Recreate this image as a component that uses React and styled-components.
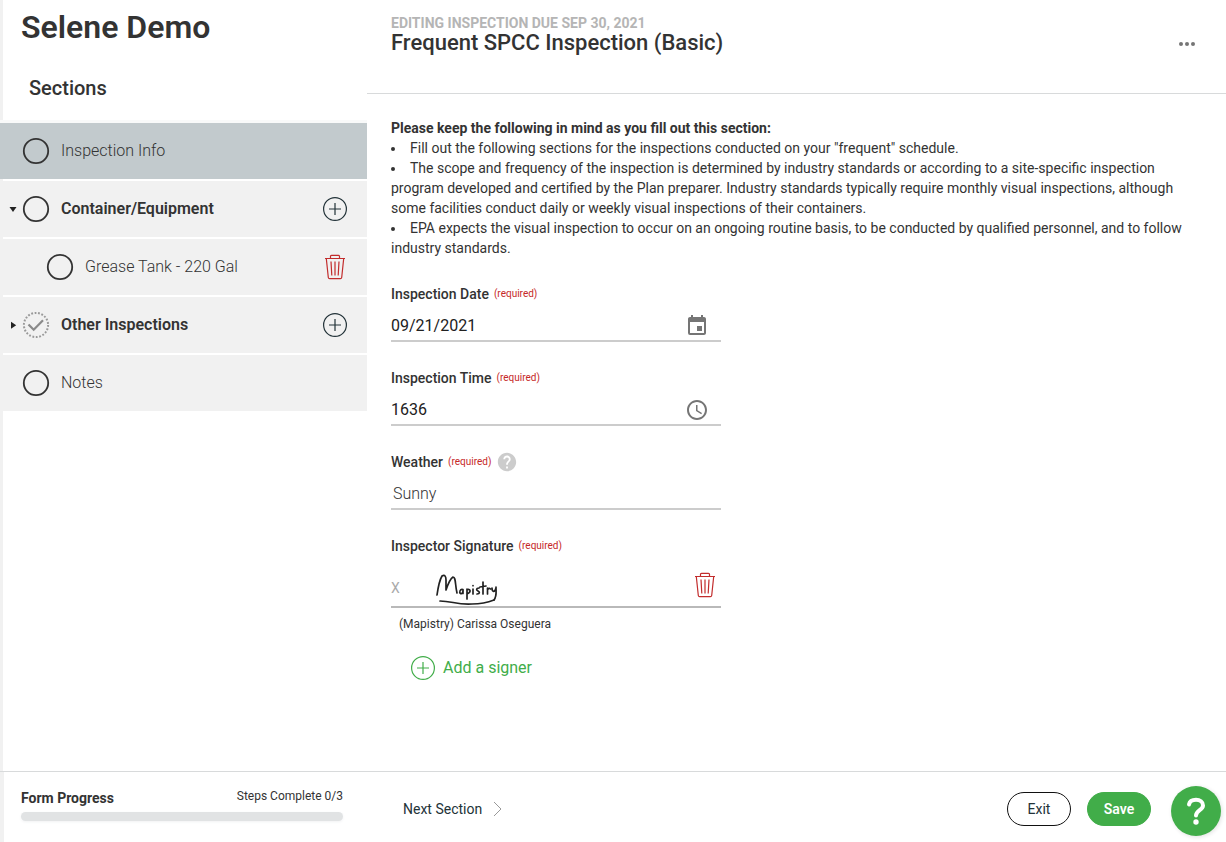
import React from "react";
import styled, { createGlobalStyle, css } from "styled-components";
import { MdEvent, MdAccessTime, MdHelp } from "react-icons/md";

const color = {
  text: "#333333",
  ink: "#223238",
  grey: "#f1f1f1",
  selected: "#c2cacd",
  line: "#d8dadb",
  field: "#cccccc",
  green: "#41ad49",
  red: "#c62828",
};

const GlobalStyle = createGlobalStyle`
  *, *::before, *::after { box-sizing: border-box; }
  body {
    margin: 0;
    background: #fff;
    color: ${color.text};
    font-family: Roboto, "Liberation Sans", sans-serif;
    font-size: 14px;
    line-height: 20px;
  }
  h1, h2, h3, p, ul { margin: 0; padding: 0; }
  ul { list-style: none; }
  button, input { font: inherit; color: inherit; }
`;

const Page = styled.div`
  display: grid;
  grid-template-columns: 367px minmax(0, 1fr);
  grid-template-rows: 1fr auto;
  min-height: 100vh;
`;

const Sidebar = styled.aside`
  background: linear-gradient(to right, ${color.grey} 3px, #fff 3px);
`;

const SiteName = styled.h1`
  padding: 7px 21px 0;
  font-size: 32px;
  line-height: 40px;
  font-weight: 600;
`;

const SectionsTitle = styled.h2`
  padding: 29px 29px 0;
  font-size: 20px;
  line-height: 24px;
  font-weight: 500;
`;

const SectionList = styled.ul`
  display: flex;
  flex-direction: column;
  gap: 2px;
  margin-top: 20px;
  border-top: 3px solid #f8f9f9;
`;

const SectionRow = styled.li`
  display: flex;
  align-items: center;
  height: 56px;
  padding: 0 20px 0 ${(p) => (p.$nested ? 32 : 8)}px;
  background: ${(p) => (p.$selected ? color.selected : color.grey)};
`;

const Toggle = styled.button`
  display: flex;
  align-items: center;
  justify-content: center;
  width: 10px;
  height: 24px;
  padding: 0;
  border: 0;
  background: none;
`;

const ToggleSpace = styled.span`
  width: 10px;
`;

const SectionLink = styled.a`
  display: flex;
  flex: 1;
  align-items: center;
  gap: 11px;
  margin-left: 4px;
  color: ${color.text};
  font-size: 16px;
  line-height: 24px;
  font-weight: ${(p) => (p.$strong ? 600 : 300)};
  text-decoration: none;
`;

const IconButton = styled.button`
  display: flex;
  align-items: center;
  justify-content: center;
  padding: 0;
  border: 0;
  background: none;
  cursor: pointer;
`;

const RowAction = styled(IconButton)`
  width: 24px;
`;

const Main = styled.main`
  min-width: 0;
`;

const Header = styled.header`
  display: flex;
  align-items: flex-start;
  justify-content: space-between;
  height: 94px;
  padding: 14px 30px 0 24px;
  border-bottom: 1px solid ${color.line};
`;

const Eyebrow = styled.p`
  color: #b5b5b5;
  font-weight: 700;
  line-height: 18px;
  text-transform: uppercase;
`;

const FormTitle = styled.h2`
  font-size: 22px;
  line-height: 22px;
  font-weight: 500;
`;

const MenuButton = styled(IconButton)`
  margin-top: 26px;
`;

const Body = styled.form`
  padding: 24px;
`;

const Guidance = styled.section`
  h3 {
    font-size: 14px;
    line-height: 20px;
    font-weight: 700;
  }
  li::before {
    content: "";
    display: inline-block;
    width: 4px;
    height: 4px;
    margin-right: 15px;
    border-radius: 50%;
    background: ${color.text};
    vertical-align: 2px;
  }
`;

const Fields = styled.div`
  display: flex;
  flex-direction: column;
  gap: 26px;
  width: 330px;
  margin-top: 26px;
`;

const LabelLine = styled.div`
  display: flex;
  align-items: center;
  gap: 5px;
  height: 20px;
  label, h3 {
    font-size: 14px;
    line-height: 20px;
    font-weight: 500;
  }
`;

const Required = styled.span`
  color: ${color.red};
  font-size: 10px;
  line-height: 20px;
`;

const InputLine = styled.div`
  display: flex;
  align-items: center;
  height: 38px;
  padding: ${(p) => (p.$inset ? "8px 12px 0 2px" : "8px 12px 0 0")};
  border-bottom: 2px solid ${color.field};
  svg { color: #757575; }
`;

const Input = styled.input`
  flex: 1;
  min-width: 0;
  padding: 0;
  border: 0;
  outline: 0;
  background: none;
  color: ${(p) => (p.$light ? color.text : "#212121")};
  font-size: 16px;
  line-height: 24px;
  font-weight: ${(p) => (p.$light ? 300 : 400)};
`;

const SignatureLine = styled.div`
  display: flex;
  align-items: center;
  height: 52px;
  padding: 8px 5px 0 0;
  border-bottom: 2px solid #b9b9b9;
`;

const SignMark = styled.span`
  width: 44px;
  padding-top: 6px;
  color: #aaaaaa;
`;

const SignatureArt = styled.span`
  display: flex;
  flex: 1;
  padding-top: 10px;
`;

const Signer = styled.p`
  padding: 6px 8px;
  font-size: 12px;
`;

const AddSigner = styled.button`
  display: flex;
  align-items: center;
  gap: 8px;
  margin: 16px 20px 0;
  padding: 0;
  border: 0;
  background: none;
  color: ${color.green};
  font-size: 16px;
  line-height: 24px;
  cursor: pointer;
`;

const Progress = styled.section`
  height: 71px;
  padding: 15px 24px 0 21px;
  border-top: 1px solid ${color.line};
  background: linear-gradient(to right, ${color.grey} 4px, #fff 4px);
`;

const ProgressText = styled.div`
  display: flex;
  justify-content: space-between;
  margin-bottom: 4px;
  h3 {
    padding-top: 1px;
    font-size: 14px;
    line-height: 20px;
    font-weight: 700;
  }
  span {
    font-size: 12px;
    line-height: 18px;
  }
`;

const Track = styled.div`
  height: 9px;
  border-radius: 5px;
  background: #e1e3e4;
  box-shadow: 0 1px 3px #f1f2f3;
`;

const Footer = styled.footer`
  display: flex;
  align-items: center;
  height: 71px;
  padding: 4px 5px 0 36px;
  border-top: 1px solid ${color.line};
`;

const NextButton = styled.button`
  display: flex;
  align-items: center;
  gap: 11px;
  margin-right: auto;
  padding: 0;
  border: 0;
  background: none;
  color: ${color.ink};
  cursor: pointer;
`;

const PillButton = styled.button`
  width: 64px;
  height: 34px;
  margin-right: 16px;
  padding: 0;
  border: 1px solid #111;
  border-radius: 17px;
  background: #fff;
  color: ${color.ink};
  cursor: pointer;
  ${(p) =>
    p.$primary &&
    css`
      border-color: ${color.green};
      background: ${color.green};
      color: #fff;
      font-weight: 600;
    `}
`;

const HelpButton = styled.button`
  display: flex;
  align-items: center;
  justify-content: center;
  width: 50px;
  height: 50px;
  margin: 4px 0 0 4px;
  padding: 0;
  border: 0;
  border-radius: 50%;
  background: ${color.green};
  box-shadow: 1px 1px 4px rgba(0, 0, 0, 0.12);
  cursor: pointer;
`;

function StatusIcon({ checked }) {
  return (
    <svg width="28" height="28" viewBox="0 0 28 28" fill="none" aria-hidden="true">
      {checked ? (
        <>
          <circle cx="14" cy="14" r="12.1" stroke="#999" strokeWidth="2" strokeDasharray="1.8 1.655" />
          <path d="M6.5 13.5l5.2 5.2L21 9.2" stroke="#8a8a8a" strokeWidth="2.2" />
        </>
      ) : (
        <circle cx="14" cy="14" r="12.2" stroke="#333" strokeWidth="1.8" />
      )}
    </svg>
  );
}

function Arrow({ open }) {
  return (
    <svg width="8" height="8" viewBox="0 0 8 8" fill="#222" aria-hidden="true">
      <path d={open ? "M.5 2h7L4 7z" : "M2 .7v7l5.2-3.5z"} />
    </svg>
  );
}

function PlusIcon({ stroke }) {
  return (
    <svg width="24" height="24" viewBox="0 0 24 24" fill="none" stroke={stroke} aria-hidden="true">
      <circle cx="12" cy="12" r="11.4" strokeWidth="1.2" />
      <path d="M12 6v12M6 12h12" strokeWidth="1.2" />
    </svg>
  );
}

function TrashIcon() {
  return (
    <svg width="22" height="26" viewBox="0 0 22 26" fill="none" stroke="#c22c2c" strokeWidth="1.2" aria-hidden="true">
      <path d="M1 4.5h20M6.5 4.5V2.3q0-1 1-1h7q1 0 1 1v2.2M2.3 4.5l2 19q.2 1.2 1.3 1.2h10.8q1.1 0 1.3-1.2l2-19" />
      <path d="M7 7.5l.8 14M11 7.5v14M15 7.5l-.8 14" />
    </svg>
  );
}

function Signature() {
  return (
    <svg width="64" height="34" viewBox="0 0 64 34" fill="none" stroke="#222" strokeWidth="1.7" strokeLinecap="round" strokeLinejoin="round" role="img" aria-label="Signature">
      <path d="M2 22C3 15 4 8 7 3c3-2 4 1 4 4v10c2-6 4-11 7-13 3 0 2 8 4 16" />
      <path d="M28 16.500c-3-1-4 3-2.500 4s3-2 2.500-4v4M32 16v10M32 17c3-2 5 2 0 4M38 16v5M38 12.500v.2M44 15c-3 0-3 2-1 3s2 3-1 3M48 9v12M45 14l6-1M52.500 15v6M52.500 17c1-2 2-2 3-1M57 15c0 5 3 4 4 0M61 14c0 6 1 9-2 13" />
      <path d="M5 28c12 0 17 4 32 3 10 0 17-2 22-4" />
    </svg>
  );
}

const SECTIONS = [
  { name: "Inspection Info", selected: true },
  { name: "Container/Equipment", group: true, open: true },
  { name: "Grease Tank - 220 Gal", nested: true },
  { name: "Other Inspections", group: true, checked: true },
  { name: "Notes" },
];

const GUIDANCE = [
  'Fill out the following sections for the inspections conducted on your "frequent" schedule.',
  "The scope and frequency of the inspection is determined by industry standards or according to a site-specific inspection program developed and certified by the Plan preparer. Industry standards typically require monthly visual inspections, although some facilities conduct daily or weekly visual inspections of their containers.",
  "EPA expects the visual inspection to occur on an ongoing routine basis, to be conducted by qualified personnel, and to follow industry standards.",
];

function Section({ name, selected, group, open, nested, checked }) {
  return (
    <SectionRow $selected={selected} $nested={nested}>
      {group ? (
        <Toggle type="button" aria-label={`Toggle ${name}`} aria-expanded={!!open}>
          <Arrow open={open} />
        </Toggle>
      ) : (
        <ToggleSpace />
      )}
      <SectionLink href="#" $strong={group} aria-current={selected ? "true" : undefined}>
        <StatusIcon checked={checked} />
        {name}
      </SectionLink>
      {group && (
        <RowAction type="button" aria-label={`Add to ${name}`}>
          <PlusIcon stroke="#223238" />
        </RowAction>
      )}
      {nested && (
        <RowAction type="button" aria-label={`Delete ${name}`}>
          <TrashIcon />
        </RowAction>
      )}
    </SectionRow>
  );
}

function Field({ id, label, value, light, help, icon }) {
  return (
    <div>
      <LabelLine>
        <label htmlFor={id}>{label}</label>
        <Required>(required)</Required>
        {help && (
          <IconButton type="button" aria-label={`About ${label}`}>
            <MdHelp size={22} color="#cccccc" />
          </IconButton>
        )}
      </LabelLine>
      <InputLine $inset={light}>
        <Input id={id} defaultValue={value} $light={light} />
        {icon}
      </InputLine>
    </div>
  );
}

export default function App() {
  return (
    <>
      <GlobalStyle />
      <Page>
        <Sidebar>
          <SiteName>Selene Demo</SiteName>
          <SectionsTitle>Sections</SectionsTitle>
          <SectionList>
            {SECTIONS.map((s) => (
              <Section key={s.name} {...s} />
            ))}
          </SectionList>
        </Sidebar>
        <Main>
          <Header>
            <div>
              <Eyebrow>Editing inspection due Sep 30, 2021</Eyebrow>
              <FormTitle>Frequent SPCC Inspection (Basic)</FormTitle>
            </div>
            <MenuButton type="button" aria-label="More options">
              <svg width="18" height="8" viewBox="0 0 18 8" fill="#757575" aria-hidden="true">
                <circle cx="3" cy="4" r="2" />
                <circle cx="9" cy="4" r="2" />
                <circle cx="15" cy="4" r="2" />
              </svg>
            </MenuButton>
          </Header>
          <Body>
            <Guidance>
              <h3>Please keep the following in mind as you fill out this section:</h3>
              <ul>
                {GUIDANCE.map((g) => (
                  <li key={g}>{g}</li>
                ))}
              </ul>
            </Guidance>
            <Fields>
              <Field id="date" label="Inspection Date" value="09/21/2021" icon={<MdEvent size={24} />} />
              <Field id="time" label="Inspection Time" value="1636" icon={<MdAccessTime size={24} />} />
              <Field id="weather" label="Weather" value="Sunny" light help />
              <div>
                <LabelLine>
                  <h3>Inspector Signature</h3>
                  <Required>(required)</Required>
                </LabelLine>
                <SignatureLine>
                  <SignMark>X</SignMark>
                  <SignatureArt>
                    <Signature />
                  </SignatureArt>
                  <IconButton type="button" aria-label="Delete signature">
                    <TrashIcon />
                  </IconButton>
                </SignatureLine>
                <Signer>(Mapistry) Carissa Oseguera</Signer>
                <AddSigner type="button">
                  <PlusIcon stroke={color.green} />
                  Add a signer
                </AddSigner>
              </div>
            </Fields>
          </Body>
        </Main>
        <Progress>
          <ProgressText>
            <h3>Form Progress</h3>
            <span>Steps Complete 0/3</span>
          </ProgressText>
          <Track role="progressbar" aria-label="Form progress" aria-valuenow={0} aria-valuemin={0} aria-valuemax={3} />
        </Progress>
        <Footer>
          <NextButton type="button">
            Next Section
            <svg width="9" height="16" viewBox="0 0 9 16" fill="none" stroke="#999" aria-hidden="true">
              <path d="M1 1l7 7-7 7" />
            </svg>
          </NextButton>
          <PillButton type="button">Exit</PillButton>
          <PillButton type="button" $primary>
            Save
          </PillButton>
          <HelpButton type="button" aria-label="Help">
            <svg width="22" height="28" viewBox="0 0 22 28" fill="none" aria-hidden="true">
              <path d="M4 7.5C4.600 4.500 7.400 2.800 11 2.800c4 0 7 2.200 7 5.600 0 4.800-7 4.800-7 10.200" stroke="#fff" strokeWidth="4" strokeLinecap="round" />
              <circle cx="11" cy="25" r="2.7" fill="#fff" />
            </svg>
          </HelpButton>
        </Footer>
      </Page>
    </>
  );
}
